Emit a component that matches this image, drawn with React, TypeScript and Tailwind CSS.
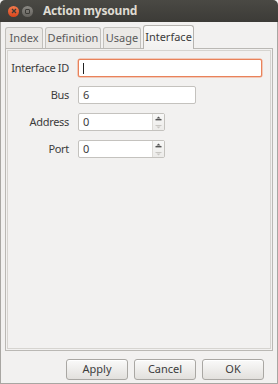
import React from "react";

const font = { fontFamily: '"Noto Sans", "Open Sans", sans-serif' };

function Spin() {
  return (
    <div className="flex h-full w-[12px] flex-col items-center justify-center gap-[4px] border-l border-[#dcdad6] bg-gradient-to-b from-[#f8f8f7] to-[#ecebe9]">
      <svg width="7" height="5" viewBox="0 0 7 5">
        <path d="M1.5 2.5 L3.5 0.5 L5.5 2.5 Z" fill="#555" />
        <rect x="0.5" y="3" width="6" height="1.4" fill="#555" />
      </svg>
      <svg width="7" height="4" viewBox="0 0 7 4">
        <rect x="0.5" y="0" width="6" height="1" fill="#c8c6c2" />
        <path d="M1.5 1.5 L5.5 1.5 L3.5 3.5 Z" fill="#c8c6c2" />
      </svg>
    </div>
  );
}

function Row({ label, children }: { label: string; children: React.ReactNode }) {
  return (
    <div className="flex h-[18px] items-center">
      <div className="w-[61px] whitespace-nowrap text-right text-[11px] tracking-[-0.3px] text-[#3c3c3c]">{label}</div>
      <div className="ml-[9px] flex h-full">{children}</div>
    </div>
  );
}

export default function App() {
  return (
    <div style={font} className="flex h-[384px] w-[278px] flex-col overflow-hidden bg-[#f2f1f0]">
      <div className="flex h-[22px] shrink-0 items-center rounded-t-[5px] bg-gradient-to-b from-[#4a4944] to-[#3c3b37]">
        <div className="ml-[8px] flex h-[11px] w-[11px] items-center justify-center rounded-full bg-gradient-to-b from-[#f27a4c] to-[#d9441a]">
          <svg width="6" height="6" viewBox="0 0 6 6">
            <path d="M1 1 L5 5 M5 1 L1 5" stroke="#3c3b37" strokeWidth="1.3" />
          </svg>
        </div>
        <div className="ml-[3px] flex h-[11px] w-[11px] items-center justify-center rounded-full bg-gradient-to-b from-[#8a8883] to-[#64625d]">
          <div className="h-[5px] w-[5px] rounded-[1px] border border-[#3c3b37]" />
        </div>
        <div className="ml-[10px] whitespace-nowrap text-[12px] font-bold tracking-[-0.2px] text-[#dfdbd2]">Action mysound</div>
      </div>
      <div className="flex flex-1 flex-col border-x border-b border-[#a8a6a2] px-[4px]">
        <div className="mt-[3px] flex h-[23px] items-end">
          <div className="flex h-[21px] w-[38px] items-center justify-center rounded-t-[3px] border border-b-0 border-[#c2c0bc] bg-[#ebe9e6] text-[11px] text-[#5a5a5a]">Index</div>
          <div className="ml-[2px] flex h-[21px] w-[56px] items-center justify-center rounded-t-[3px] border border-b-0 border-[#c2c0bc] bg-[#ebe9e6] text-[11px] text-[#5a5a5a]">Definition</div>
          <div className="ml-[2px] flex h-[21px] w-[38px] items-center justify-center rounded-t-[3px] border border-b-0 border-[#c2c0bc] bg-[#ebe9e6] text-[11px] text-[#5a5a5a]">Usage</div>
          <div className="relative z-10 -mb-[1px] ml-[2px] flex h-[24px] w-[51px] items-center justify-center rounded-t-[3px] border border-b-0 border-[#b6b4b0] bg-gradient-to-b from-[#fbfbfa] to-[#f2f1f0] text-[11px] text-[#3c3c3c]">Interface</div>
        </div>
        <div className="h-[303px] border border-[#bab8b4] p-[1px]">
          <div className="flex h-full flex-col gap-[9px] border border-[#d6d4d0] pt-[8px]">
            <Row label="Interface ID">
              <div className="flex h-[18px] w-[184px] items-center rounded-[2px] border border-[#e9825a] bg-white pl-[4px] shadow-[0_0_0_0.5px_#f0a282]">
                <div className="h-[11px] w-[1px] bg-[#222]" />
              </div>
            </Row>
            <Row label="Bus">
              <div className="flex h-[18px] w-[118px] items-center rounded-[2px] border border-[#c4c2be] bg-white pl-[4px] text-[11px] text-[#3c3c3c]">6</div>
            </Row>
            <Row label="Address">
              <div className="flex h-[18px] w-[87px] items-center rounded-[2px] border border-[#c4c2be] bg-white text-[11px] text-[#3c3c3c]">
                <div className="flex-1 pl-[4px]">0</div>
                <Spin />
              </div>
            </Row>
            <Row label="Port">
              <div className="flex h-[18px] w-[87px] items-center rounded-[2px] border border-[#c4c2be] bg-white text-[11px] text-[#3c3c3c]">
                <div className="flex-1 pl-[4px]">0</div>
                <Spin />
              </div>
            </Row>
          </div>
        </div>
        <div className="mt-[8px] flex justify-end gap-[6px] pr-[9px]">
          {["Apply", "Cancel", "OK"].map((t) => (
            <div key={t} className="flex h-[21px] w-[62px] items-center justify-center rounded-[3px] border border-[#a9a7a3] bg-gradient-to-b from-[#fafaf9] to-[#e2e0dd] text-[11px] text-[#3c3c3c] shadow-[inset_0_1px_0_#fff]">
              {t}
            </div>
          ))}
        </div>
      </div>
    </div>
  );
}
